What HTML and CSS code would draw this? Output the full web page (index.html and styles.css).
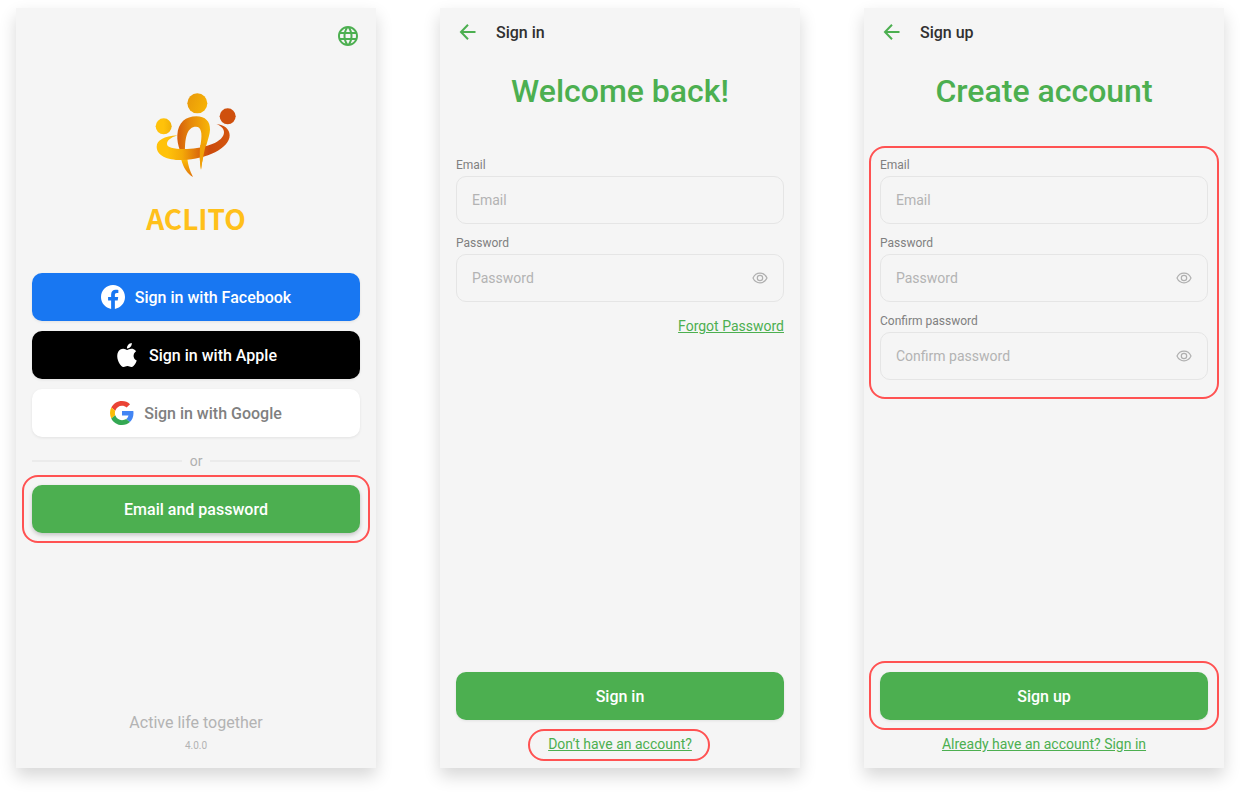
FILE: index.html
```html
<!DOCTYPE html>
<html lang="en">
<head>
    <meta charset="UTF-8">
    <meta name="viewport" content="width=device-width, initial-scale=1.0">
    <title>Aclito</title>
    <link rel="stylesheet" href="styles.css">
</head>
<body>
    <!-- Shared icons -->
    <svg class="sprite" aria-hidden="true">
        <symbol id="icon-back" viewBox="0 0 24 24">
            <path d="M19.500 12H5.500M12 4.800L5 12l7 7.200" fill="none" stroke="currentColor" stroke-width="2"/>
        </symbol>
        <symbol id="icon-eye" viewBox="0 0 16 16">
            <path d="M1 8C2.400 4.900 4.900 3.200 8 3.200S13.600 4.900 15 8C13.600 11.100 11.100 12.800 8 12.800S2.400 11.100 1 8z" fill="none" stroke="currentColor" stroke-width="1.200"/>
            <circle cx="8" cy="8" r="2.700" fill="none" stroke="currentColor" stroke-width="1.200"/>
        </symbol>
    </svg>

    <main class="screens">
        <!-- Start screen -->
        <section class="screen start">
            <button class="icon-button language" type="button" aria-label="Language">
                <svg width="24" height="24" viewBox="0 0 24 24" fill="currentColor"><path d="M11.990 2C6.470 2 2 6.480 2 12s4.470 10 9.990 10C17.520 22 22 17.520 22 12S17.520 2 11.990 2zm6.930 6h-2.950c-.32-1.250-.78-2.450-1.380-3.560 1.840.63 3.370 1.910 4.330 3.560zM12 4.040c.83 1.200 1.480 2.530 1.910 3.960h-3.820c.43-1.430 1.080-2.760 1.910-3.960zM4.260 14C4.100 13.360 4 12.690 4 12s.1-1.360.26-2h3.380c-.08.66-.14 1.320-.14 2 0 .68.06 1.340.14 2H4.260zm.82 2h2.950c.32 1.250.78 2.450 1.380 3.560-1.840-.63-3.370-1.900-4.330-3.560zm2.950-8H5.080c.96-1.660 2.490-2.930 4.330-3.560C8.810 5.550 8.350 6.750 8.030 8zM12 19.960c-.83-1.200-1.480-2.530-1.910-3.960h3.820c-.43 1.430-1.080 2.760-1.910 3.960zM14.340 14H9.660c-.09-.66-.16-1.320-.16-2 0-.68.07-1.350.16-2h4.680c.09.65.16 1.320.16 2 0 .68-.07 1.340-.16 2zm.25 5.560c.6-1.110 1.060-2.310 1.380-3.560h2.950c-.96 1.650-2.490 2.930-4.330 3.560zM16.360 14c.08-.66.14-1.320.14-2 0-.68-.06-1.340-.14-2h3.380c.16.64.26 1.310.26 2s-.1 1.360-.26 2h-3.380z"/></svg>
            </button>

            <div class="brand">
                <svg class="logo" width="82" height="85" viewBox="57 39 246 255" aria-hidden="true">
                    <defs>
                        <linearGradient id="head" x1="0" y1="0.300" x2="1" y2="0.700">
                            <stop offset="0" stop-color="#e99a0a"/>
                            <stop offset="1" stop-color="#f7b305"/>
                        </linearGradient>
                        <linearGradient id="left-head" x1="0" y1="0" x2="1" y2="0">
                            <stop offset="0.500" stop-color="#ffc20a"/>
                            <stop offset="1" stop-color="#f0b008"/>
                        </linearGradient>
                        <linearGradient id="body" gradientUnits="userSpaceOnUse" x1="124" y1="0" x2="222" y2="0">
                            <stop offset="0" stop-color="#d45c0c"/>
                            <stop offset="0.400" stop-color="#e6880b"/>
                            <stop offset="1" stop-color="#f8b606"/>
                        </linearGradient>
                        <linearGradient id="ring" gradientUnits="userSpaceOnUse" x1="62" y1="0" x2="281" y2="0">
                            <stop offset="0.150" stop-color="#ffc20a"/>
                            <stop offset="0.350" stop-color="#f4a908"/>
                            <stop offset="0.600" stop-color="#d9640c"/>
                            <stop offset="0.720" stop-color="#cb4a0c"/>
                            <stop offset="1" stop-color="#d4560f"/>
                        </linearGradient>
                        <linearGradient id="leg" gradientUnits="userSpaceOnUse" x1="0" y1="238" x2="0" y2="291">
                            <stop offset="0" stop-color="#fdbd08"/>
                            <stop offset="1" stop-color="#df720c"/>
                        </linearGradient>
                    </defs>
                    <circle cx="184" cy="70" r="30" fill="url(#head)"/>
                    <circle cx="83" cy="139" r="24" fill="url(#left-head)"/>
                    <circle cx="275" cy="109" r="24" fill="#cf500d"/>
                    <path d="M124 165C126 127 150 109 181 109C208 109 223 125 222 149C221 174 203 207 195 269C190 240 190 215 194 192C200 158 195 140 180 140C154 140 147 172 147 212H132C126 195 123 180 124 165z" fill="url(#body)"/>
                    <path d="M135 236C142 263 154 281 171 291C161 271 156 255 154 236z" fill="url(#leg)"/>
                    <path d="M125 166C83 169 62 181 62 200C62 227 95 241 140 240C212 238 281 205 281 166C281 147 265 134 241 132C257 138 264 147 264 157C264 186 207 206 153 207C115 208 93 203 93 192C93 182 103 173 125 166z" fill="url(#ring)"/>
                    <path d="M193 195L211 188C204 218 199 239 195 269C191 245 190 215 193 195z" fill="#f0a009"/>
                </svg>
                <h1>ACLITO</h1>
            </div>

            <div class="providers">
                <button class="button facebook" type="button">
                    <svg width="24" height="24" viewBox="0 0 24 24" fill="currentColor"><path d="M24 12.073c0-6.627-5.373-12-12-12s-12 5.373-12 12c0 5.990 4.388 10.954 10.125 11.854v-8.385H7.078v-3.470h3.047V9.430c0-3.007 1.792-4.669 4.533-4.669 1.312 0 2.686.235 2.686.235v2.953H15.830c-1.491 0-1.956.925-1.956 1.874v2.250h3.328l-.532 3.470h-2.796v8.385C19.612 23.027 24 18.062 24 12.073z"/></svg>
                    Sign in with Facebook
                </button>
                <button class="button apple" type="button">
                    <svg width="24" height="24" viewBox="0 0 24 24" fill="currentColor"><path d="M12.152 6.896c-.948 0-2.415-1.078-3.960-1.040-2.040.027-3.910 1.183-4.961 3.014-2.117 3.675-.546 9.103 1.519 12.090 1.013 1.454 2.208 3.090 3.792 3.039 1.520-.065 2.090-.987 3.935-.987 1.831 0 2.350.987 3.960.948 1.637-.026 2.676-1.480 3.676-2.948 1.156-1.688 1.636-3.325 1.662-3.415-.039-.013-3.182-1.221-3.220-4.857-.026-3.040 2.480-4.494 2.597-4.559-1.429-2.090-3.623-2.324-4.390-2.376-2-.156-3.675 1.090-4.610 1.090zM15.530 3.830c.843-1.012 1.400-2.427 1.245-3.830-1.207.052-2.662.805-3.532 1.818-.780.896-1.454 2.338-1.273 3.714 1.338.104 2.715-.688 3.559-1.701"/></svg>
                    Sign in with Apple
                </button>
                <button class="button google" type="button">
                    <svg width="24" height="24" viewBox="0 0 48 48">
                        <path fill="#EA4335" d="M24 9.500c3.540 0 6.710 1.220 9.210 3.600l6.850-6.850C35.900 2.380 30.470 0 24 0 14.620 0 6.510 5.380 2.560 13.220l7.980 6.190C12.430 13.720 17.740 9.500 24 9.500z"/>
                        <path fill="#4285F4" d="M46.980 24.550c0-1.570-.15-3.090-.38-4.550H24v9.020h12.940c-.58 2.960-2.260 5.480-4.780 7.180l7.730 6c4.510-4.180 7.090-10.360 7.090-17.650z"/>
                        <path fill="#FBBC05" d="M10.530 28.590c-.48-1.450-.76-2.990-.76-4.590s.27-3.140.76-4.590l-7.980-6.190C.92 16.460 0 20.120 0 24c0 3.880.92 7.540 2.560 10.780l7.970-6.190z"/>
                        <path fill="#34A853" d="M24 48c6.480 0 11.930-2.130 15.890-5.810l-7.730-6c-2.150 1.450-4.920 2.300-8.160 2.300-6.260 0-11.570-4.220-13.470-9.910l-7.980 6.190C6.510 42.620 14.620 48 24 48z"/>
                    </svg>
                    Sign in with Google
                </button>
                <div class="divider">or</div>
                <div class="highlight">
                    <button class="button primary raised" type="button">Email and password</button>
                </div>
            </div>

            <footer class="about">
                <p class="tagline">Active life together</p>
                <p class="version">4.0.0</p>
            </footer>
        </section>

        <!-- Sign in screen -->
        <section class="screen">
            <header class="top-bar">
                <button class="icon-button" type="button" aria-label="Back"><svg width="24" height="24"><use href="#icon-back"/></svg></button>
                <span>Sign in</span>
            </header>
            <h2>Welcome back!</h2>
            <form class="form">
                <div class="fields">
                    <div class="field">
                        <label for="signin-email">Email</label>
                        <div class="control">
                            <input id="signin-email" type="email" placeholder="Email">
                        </div>
                    </div>
                    <div class="field">
                        <label for="signin-password">Password</label>
                        <div class="control">
                            <input id="signin-password" type="password" placeholder="Password">
                            <button class="icon-button eye" type="button" aria-label="Show password"><svg width="16" height="16"><use href="#icon-eye"/></svg></button>
                        </div>
                    </div>
                </div>
                <a class="link forgot" href="#">Forgot Password</a>
                <div class="actions">
                    <button class="button primary" type="submit">Sign in</button>
                    <div class="highlight around-link">
                        <a class="link" href="#">Don’t have an account?</a>
                    </div>
                </div>
            </form>
        </section>

        <!-- Sign up screen -->
        <section class="screen">
            <header class="top-bar">
                <button class="icon-button" type="button" aria-label="Back"><svg width="24" height="24"><use href="#icon-back"/></svg></button>
                <span>Sign up</span>
            </header>
            <h2>Create account</h2>
            <form class="form">
                <div class="fields highlight around-fields">
                    <div class="field">
                        <label for="signup-email">Email</label>
                        <div class="control">
                            <input id="signup-email" type="email" placeholder="Email">
                        </div>
                    </div>
                    <div class="field">
                        <label for="signup-password">Password</label>
                        <div class="control">
                            <input id="signup-password" type="password" placeholder="Password">
                            <button class="icon-button eye" type="button" aria-label="Show password"><svg width="16" height="16"><use href="#icon-eye"/></svg></button>
                        </div>
                    </div>
                    <div class="field">
                        <label for="signup-confirm">Confirm password</label>
                        <div class="control">
                            <input id="signup-confirm" type="password" placeholder="Confirm password">
                            <button class="icon-button eye" type="button" aria-label="Show password"><svg width="16" height="16"><use href="#icon-eye"/></svg></button>
                        </div>
                    </div>
                </div>
                <div class="actions">
                    <div class="highlight">
                        <button class="button primary" type="submit">Sign up</button>
                    </div>
                    <a class="link" href="#">Already have an account? Sign in</a>
                </div>
            </form>
        </section>
    </main>
</body>
</html>
```
FILE: styles.css
```css
* {
    box-sizing: border-box;
}
body {
    margin: 0;
    font-family: Roboto, "Liberation Sans", sans-serif;
    background: #fff;
    color: #303030;
}
h1, h2, p {
    margin: 0;
}
button, input {
    font: inherit;
}
svg {
    display: block;
}
.sprite {
    position: absolute;
    width: 0;
    height: 0;
}

/* Screens */
.screens {
    display: grid;
    grid-template-columns: repeat(3, 1fr);
    gap: 64px;
    min-height: 100vh;
    padding: 8px 16px 24px;
}
.screen {
    display: flex;
    flex-direction: column;
    padding: 0 16px 16px;
    background: #f5f5f5;
    box-shadow: 0 8px 16px rgba(0, 0, 0, 0.16);
}
.start {
    padding-top: 16px;
}
.icon-button {
    padding: 0;
    border: none;
    background: none;
    color: #4caf50;
    cursor: pointer;
}
.language {
    align-self: flex-end;
}

/* Brand */
.brand {
    display: flex;
    flex-direction: column;
    align-items: center;
    gap: 20px;
    padding: 45px 0 35px;
}
.brand h1 {
    font-family: "Noto Sans CJK SC", sans-serif;
    font-size: 28px;
    line-height: 40px;
    font-weight: 700;
    color: #ffc01a;
}

/* Buttons */
.providers {
    display: flex;
    flex-direction: column;
    gap: 10px;
}
.button {
    display: flex;
    align-items: center;
    justify-content: center;
    gap: 10px;
    width: 100%;
    height: 48px;
    border: none;
    border-radius: 10px;
    font-size: 16px;
    font-weight: 500;
    color: #fff;
    box-shadow: 0 1px 3px rgba(0, 0, 0, 0.08);
    cursor: pointer;
}
.facebook {
    background: #1877f2;
}
.apple {
    background: #000;
}
.google {
    background: #fff;
    color: #808080;
}
.primary {
    background: #4caf50;
}
.raised {
    box-shadow: 0 2px 4px rgba(0, 0, 0, 0.2);
}
.divider {
    display: flex;
    align-items: center;
    gap: 8px;
    font-size: 14px;
    line-height: 28px;
    color: #b0b0b0;
}
.divider::before,
.divider::after {
    content: "";
    flex: 1;
    height: 2px;
    background: #ebebeb;
}

/* Red outline over a part of the screen */
.highlight {
    position: relative;
}
.highlight::after {
    content: "";
    position: absolute;
    inset: -10px;
    border: 2px solid #ff5252;
    border-radius: 16px;
    pointer-events: none;
}
.form .highlight::after {
    inset: -11px -11px -10px;
}
.form .around-link::after {
    inset: -7px -18px -9px -20px;
}
.form .around-fields::after {
    inset: -10px -11px -19px;
}

/* Version */
.about {
    display: flex;
    flex-direction: column;
    gap: 6px;
    margin-top: auto;
    text-align: center;
    color: #b3b3b3;
}
.tagline {
    font-size: 16px;
    line-height: 22px;
}
.version {
    font-size: 10px;
    line-height: 12px;
}

/* Forms */
.top-bar {
    display: flex;
    align-items: center;
    gap: 16px;
    height: 48px;
    font-size: 16px;
    font-weight: 500;
}
h2 {
    padding: 15px 0 45px;
    font-size: 32px;
    line-height: 40px;
    font-weight: 500;
    text-align: center;
    color: #4caf50;
}
.form {
    display: flex;
    flex: 1;
    flex-direction: column;
}
.fields {
    display: flex;
    flex-direction: column;
    gap: 10px;
}
.field {
    display: flex;
    flex-direction: column;
    gap: 2px;
    font-size: 14px;
}
.field label {
    font-size: 12px;
    line-height: 18px;
    color: #808080;
}
.control {
    display: flex;
    align-items: center;
    height: 48px;
    padding: 0 15px;
    border: 1px solid #e5e5e5;
    border-radius: 10px;
}
.control input {
    flex: 1;
    min-width: 0;
    padding: 0;
    border: none;
    outline: none;
    background: none;
    color: #303030;
}
.control input::placeholder {
    color: #b3b3b3;
}
.eye {
    color: #b0b0b0;
}
.link {
    font-size: 14px;
    line-height: 16px;
    color: #4caf50;
}
.forgot {
    align-self: flex-end;
    margin-top: 16px;
}
.actions {
    display: flex;
    flex-direction: column;
    align-items: center;
    gap: 16px;
    margin-top: auto;
}
.actions .highlight:not(.around-link) {
    align-self: stretch;
}
.around-link {
    line-height: 16px;
}
```
